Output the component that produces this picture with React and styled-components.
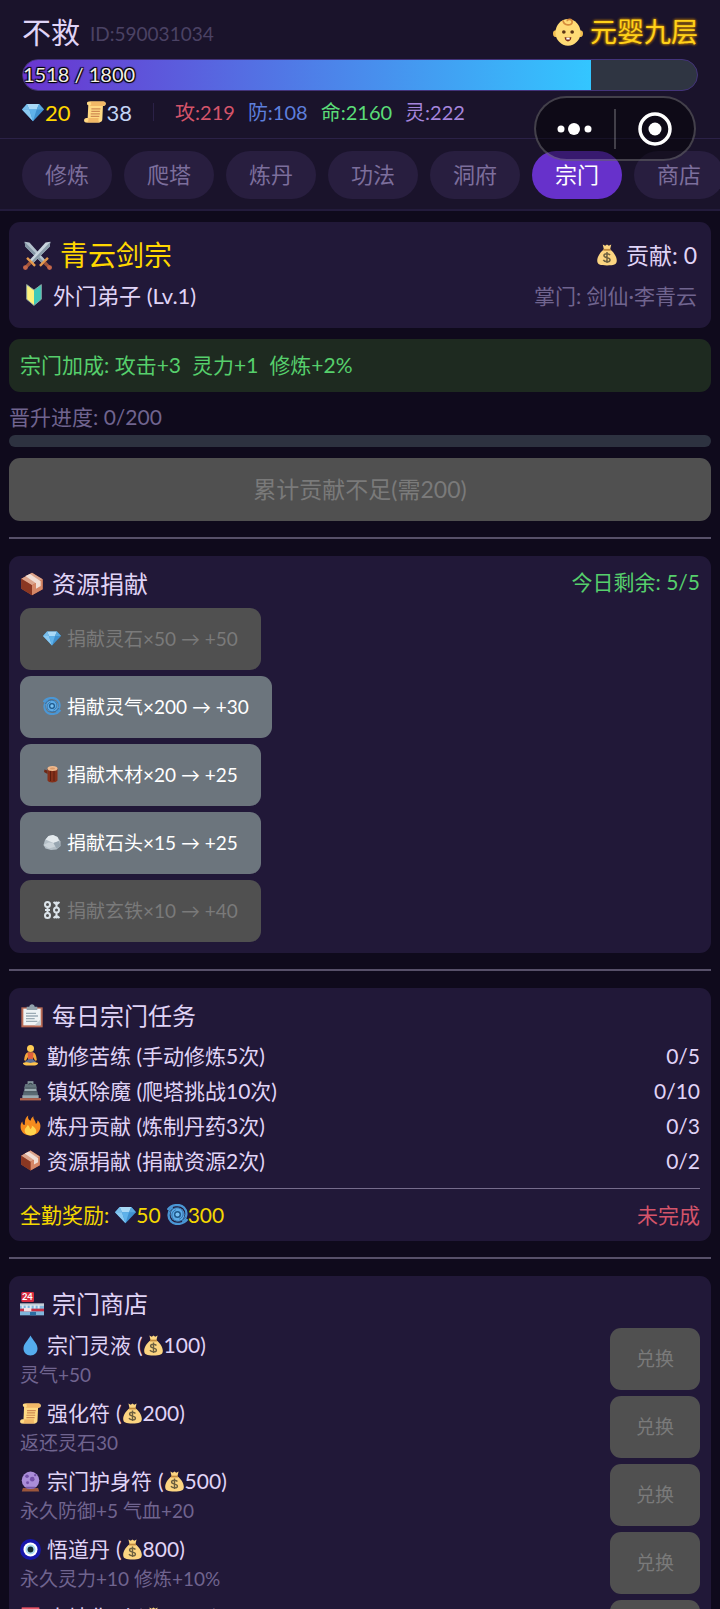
import { useState } from "react";
import styled, { createGlobalStyle } from "styled-components";

const GlobalStyle = createGlobalStyle`
    * {
        box-sizing: border-box;
    }
    body {
        margin: 0;
        background-color: #0f0a1c;
    }
    body, button {
        font-family: Lato, "Noto Sans CJK SC", sans-serif;
    }
`

const Page = styled.div`
    height: 100vh;
    display: flex;
    flex-direction: column;
    overflow: hidden;
    color: #e0d4f7;
    font-size: 21px;
`

/* ---------- header ---------- */

const Header = styled.header`
    position: relative;
    flex-shrink: 0;
    padding: 15px 22px 11px;
    background-color: #1a132b;
    border-bottom: 1px solid #2b2147;
`
const HeaderRow = styled.div`
    display: flex;
    align-items: center;
    justify-content: space-between;
    height: 36px;
`
const Player = styled.div`
    display: flex;
    align-items: center;
    gap: 10px;
`
const PlayerName = styled.span`
    font-size: 29px;
    line-height: 36px;
`
const PlayerId = styled.span`
    font-size: 19px;
    color: #4b4264;
`
const Realm = styled.div`
    display: flex;
    align-items: center;
    gap: 7px;
    font-size: 27px;
    line-height: 34px;
    padding-bottom: 2px;
    color: #ffd21a;
    text-shadow: 0 0 3px #c98500, 0 0 3px #c98500;
`
const ExpBar = styled.div`
    display: grid;
    align-items: center;
    height: 32px;
    margin: 8px 0 6px;
    border: 1px solid #43337a;
    border-radius: 16px;
    background-color: #2f3542;
    overflow: hidden;
`
const ExpFill = styled.div`
    grid-area: 1 / 1;
    height: 100%;
    background: linear-gradient(90deg, #6a35d0, #33c6ff);
`
const ExpText = styled.span`
    grid-area: 1 / 1;
    font-size: 20px;
    line-height: 28px;
    padding-bottom: 2px;
    color: #f4efe4;
    text-shadow: 1px 1px 1px #000, -1px -1px 1px #000, 1px -1px 1px #000, -1px 1px 1px #000;
`
const Stats = styled.div`
    display: flex;
    align-items: center;
    gap: 13px;
    height: 30px;
`
const Currency = styled.span`
    display: flex;
    align-items: center;
    gap: 1px;
    font-size: 22px;
    color: ${props => props.color};
`
const StatDivider = styled.span`
    width: 1px;
    height: 18px;
    margin: 0 8px;
    background-color: #2b2147;
`
const Stat = styled.span`
    font-size: 20px;
    line-height: 30px;
    color: ${props => props.color};
`
const Capsule = styled.div`
    position: absolute;
    top: 96px;
    right: 24px;
    z-index: 2;
    display: flex;
    align-items: center;
    width: 162px;
    height: 65px;
    border: 2px solid rgba(255, 255, 255, 0.22);
    border-radius: 33px;
    background-color: rgba(0, 0, 0, 0.45);
`
const CapsuleButton = styled.button`
    flex: 1;
    display: flex;
    justify-content: center;
    padding: 0;
    border: 0;
    background: none;
    cursor: pointer;
    & + & {
        border-left: 2px solid rgba(255, 255, 255, 0.22);
    }
`

/* ---------- tabs ---------- */

const Tabs = styled.nav`
    flex-shrink: 0;
    display: flex;
    gap: 12px;
    padding: 12px 22px 10px;
    background-color: #1a132b;
    border-bottom: 2px solid #231b3c;
    overflow: hidden;
`
const Tab = styled.button`
    flex-shrink: 0;
    height: 48px;
    padding: 0 23px;
    border: 0;
    border-radius: 24px;
    font-size: 22px;
    line-height: 48px;
    color: ${props => props.$active ? "#ffffff" : "#7c6e9c"};
    background-color: ${props => props.$active ? "#6731cb" : "#281e3f"};
    cursor: pointer;
`

/* ---------- content ---------- */

const Main = styled.main`
    flex: 1;
    min-height: 0;
    padding: 11px 9px;
    overflow-y: auto;
    scrollbar-width: none;
`
const Card = styled.section`
    padding: 11px;
    border-radius: 11px;
    background-color: #211838;
`
const SectCard = styled(Card)`
    padding: 13px 14px;
`
const Line = styled.div`
    display: flex;
    align-items: center;
    justify-content: space-between;
    height: ${props => props.$tall ? "40px" : "31px"};
    line-height: 31px;
`
const Label = styled.span`
    display: flex;
    align-items: center;
    gap: ${props => props.$gap || 6}px;
    font-size: ${props => props.$size || 21}px;
    color: ${props => props.color};
`
const Bonus = styled.div`
    display: flex;
    align-items: center;
    gap: 11px;
    height: 53px;
    margin-top: 11px;
    padding: 0 11px 3px;
    border-radius: 11px;
    color: #56cf6c;
    background-color: #1e2a20;
`
const ProgressLabel = styled.div`
    margin: 10px 0 3px;
    line-height: 30px;
    color: #70648f;
`
const ProgressTrack = styled.div`
    height: 12px;
    border-radius: 6px;
    background-color: #2d3240;
`
const Button = styled.button`
    height: 62px;
    padding: 0 23px 3px;
    border: 0;
    border-radius: 11px;
    font-size: 19px;
    color: #ffffff;
    background-color: #6c757d;
    cursor: pointer;
    &:disabled {
        color: #7a7a7a;
        background-color: #505050;
        cursor: default;
    }
`
const PromoteButton = styled(Button)`
    display: block;
    width: 100%;
    height: 63px;
    margin-top: 11px;
    font-size: 23px;
`
const DonateButton = styled(Button)`
    display: flex;
    align-items: center;
    gap: 6px;
`
const BuyButton = styled(Button)`
    width: 90px;
`
const Divider = styled.hr`
    height: 2px;
    margin: 16px 0 17px;
    border: 0;
    background-color: #575069;
`
const InnerDivider = styled(Divider)`
    height: 1px;
    margin: 12px 0 10px;
    background-color: #766c8c;
`
const CardHead = styled.div`
    display: flex;
    align-items: center;
    justify-content: space-between;
    margin-bottom: 7px;
    line-height: 34px;
`
const CardTitle = styled.h2`
    display: flex;
    align-items: center;
    gap: 8px;
    margin: 0;
    font-size: 24px;
    font-weight: 400;
`
const Remaining = styled.span`
    line-height: 30px;
    padding-bottom: 4px;
    color: #56cf6c;
`
const Stack = styled.div`
    display: flex;
    flex-direction: column;
    align-items: ${props => props.$start ? "flex-start" : "stretch"};
    gap: ${props => props.$gap}px;
`
const Goods = styled.div`
    display: flex;
    align-items: center;
    justify-content: space-between;
    height: 62px;
`
const GoodsName = styled.div`
    display: flex;
    align-items: center;
    gap: 6px;
    line-height: 32px;
`
const Price = styled.span`
    display: flex;
    align-items: center;
`
const GoodsDesc = styled.div`
    font-size: 19px;
    line-height: 28px;
    color: #70648f;
`
const Svg = styled.svg`
    display: block;
    flex-shrink: 0;
`

/* ---------- icons ---------- */

const shapes = {
    gem: <>
        <path d="M8 5h20l8 9-18 19L0 14z" fill="#3f91d0" />
        <path d="M8 5h20l-4 9H12z" fill="#a9d9f7" />
        <path d="M8 5l4 9H0z" fill="#78bdea" />
        <path d="M28 5l-4 9h12z" fill="#5aa9de" />
        <path d="M0 14h12l6 19z" fill="#8bcaf2" />
        <path d="M12 14h12l-6 19z" fill="#5fb2ea" />
    </>,
    scroll: <>
        <path d="M8 1h24c5 0 5 7 0 7h-1l-1 22c0 3-2 5-5 5H3c-4 0-4-7 1-7h2L7 7C4 6 4 1 8 1z" fill="#ffd983" />
        <path d="M8 1c5 0 5 7 1 7h22c5 0 5-7 1-7zM3 35c4 0 5-3 4-7h17c-1 4 0 7 2 7z" fill="#f2b867" />
        <path d="M12 13h15M12 17h14M11 21h15M11 25h14" stroke="#d08a52" strokeWidth="2" />
    </>,
    baby: <>
        <circle cx="4" cy="20" r="4" fill="#f2be50" />
        <circle cx="32" cy="20" r="4" fill="#f2be50" />
        <ellipse cx="18" cy="18.500" rx="15" ry="16" fill="#ffdb76" />
        <path d="M12 4c1 7 11 7 11 2 0-4-6-4-6-1" fill="none" stroke="#d58b3c" strokeWidth="2" />
        <circle cx="13" cy="18" r="2.200" fill="#5b3416" />
        <circle cx="23" cy="18" r="2.200" fill="#5b3416" />
        <path d="M14 24c3 1 5 1 8 0 0 7-8 7-8 0z" fill="#7a2c1c" />
        <path d="M16 25h4v2h-4z" fill="#fff" />
    </>,
    swords: <>
        <path d="M2 1l6 1 20 22-4 4L3 7z" fill="#b4c2cd" />
        <path d="M2 1l24 25-2 2L3 7z" fill="#8496a5" />
        <path d="M34 1l-6 1L8 24l4 4L33 7z" fill="#c9d5de" />
        <path d="M34 1L10 26l2 2L33 7z" fill="#8b9daa" />
        <path d="M5 21l10 10M31 21L21 31" stroke="#e59a4e" strokeWidth="3" />
        <path d="M9 27l-6 6M27 27l6 6" stroke="#a1543a" strokeWidth="4" />
        <circle cx="3" cy="33" r="3" fill="#c4664a" />
        <circle cx="33" cy="33" r="3" fill="#c4664a" />
    </>,
    beginner: <>
        <path d="M6 1l12 9v25L6 25z" fill="#fdf27c" />
        <path d="M30 1l-12 9v25l12-10z" fill="#3fc9b8" />
        <path d="M6 1l12 9L30 1v24L18 35 6 25z" fill="none" stroke="#8fa9a6" strokeWidth="1.500" />
    </>,
    money: <>
        <path d="M11 1l4 2 3-2 3 2 4-2-2 8c6 4 11 12 11 18 0 7-5 8-16 8S2 34 2 27C2 21 7 13 13 9z" fill="#fcd581" />
        <path d="M12 8h12v3H12z" fill="#c08a3e" />
        <path d="M23 18c-2-3-10-3-10 1 0 5 10 2 10 7 0 4-9 4-11 0M18 13v18" fill="none" stroke="#6d6040" strokeWidth="2.400" />
    </>,
    box: <>
        <path d="M18 1l16 10v15L18 35 2 25V10z" fill="#b3593b" />
        <path d="M18 1l16 10-16 9L2 10z" fill="#dba48c" />
        <path d="M18 20l16-9v15l-16 9z" fill="#d58767" />
        <path d="M8 6l16 11v8l7-4v-7L15 3z" fill="#f1ded5" />
        <path d="M2 10l16 10v15L2 25z" fill="#8a3722" />
    </>,
    cyclone: <>
        <circle cx="18" cy="18" r="12" fill="#5caae6" />
        <path d="M1 10C7 1 22-1 29 6c7 7 5 19-3 24" fill="none" stroke="#4a97d6" strokeWidth="4" />
        <path d="M35 26c-6 9-21 11-28 4-7-7-5-19 3-24" fill="none" stroke="#4a97d6" strokeWidth="4" />
        <path d="M4 14C9 4 24 4 27 13c2 6-1 11-6 13M32 22c-5 10-20 10-23 1-2-6 1-11 6-13" fill="none" stroke="#2a6398" strokeWidth="1.500" />
        <circle cx="18" cy="18" r="6" fill="#1f5788" />
        <circle cx="18" cy="18" r="3.500" fill="#79c1f4" />
    </>,
    wood: <>
        <path d="M9 7v24c2 5 17 5 20 0V7z" fill="#84301a" />
        <path d="M9 18l-7-4 1-5 6 2z" fill="#6e2815" />
        <path d="M15 12v20M22 12v20" stroke="#5b1d0e" strokeWidth="2" />
        <ellipse cx="19" cy="7" rx="10" ry="5" fill="#efb98d" />
        <ellipse cx="19" cy="7" rx="5" ry="2" fill="#d99a6b" />
    </>,
    rock: <>
        <path d="M1 24l3-10 7-8 9-2 9 4 6 9v9l-8 7-11 1-11-3z" fill="#b5c0c8" />
        <path d="M5 13l6-7 9-2 9 4 3 8-11 4z" fill="#e3e9ed" />
        <path d="M1 24l10-5 10 1 4 7-13 4z" fill="#cbd4da" />
        <path d="M21 20l11-4 3 10-8 5z" fill="#98a6b1" />
    </>,
    chains: <g fill="none" stroke="#dbe3e9" strokeWidth="4">
        <ellipse cx="9" cy="7" rx="5" ry="5" />
        <ellipse cx="9" cy="29" rx="5" ry="5" />
        <ellipse cx="27" cy="18" rx="5" ry="5" />
        <path d="M9 10v16M27 1v13M27 22v13M21 2l6 5 6-5M21 34l6-5 6 5M4 18h10" />
    </g>,
    clipboard: <>
        <path d="M2 5h32v30H2z" fill="#b96a54" />
        <path d="M5 7h26v25H5z" fill="#eef3f5" />
        <path d="M10 4h4c0-5 8-5 8 0h4v5H10z" fill="#93a3ad" />
        <path d="M9 14h15M9 18h18M9 22h13M9 26h17" stroke="#9babb5" strokeWidth="2" />
        <path d="M31 32v-9l-9 9z" fill="#c5d0d6" />
    </>,
    lotus: <>
        <circle cx="18" cy="6" r="6" fill="#ffcd55" />
        <path d="M13 13h10c5 2 5 8 6 13l-3 1-4-7v6h-8v-6l-4 7-3-1c1-5 1-11 6-13z" fill="#f4a83a" />
        <path d="M13 13h10l-1 13h-8z" fill="#e0603f" />
        <path d="M8 29l7-5h6l7 5-4 4H12z" fill="#5c6f93" />
        <path d="M5 31c3-2 8-2 13 0 5-2 10-2 13 0 0 3-3 4-6 4H11c-3 0-6-1-6-4z" fill="#ffc44d" />
    </>,
    tower: <>
        <path d="M13 2h10v6H13z" fill="#87979f" />
        <path d="M9 7h18l2 7H7z" fill="#64747d" />
        <path d="M8 14h20l1 7H7z" fill="#9aabb1" />
        <path d="M6 20h24l1 6H5z" fill="#596a73" />
        <path d="M4 26h28v5H4z" fill="#9aabb1" />
        <path d="M0 31h36v4H0z" fill="#b0654f" />
        <path d="M9 14h18M6 20h24" stroke="#3e4d55" strokeWidth="1.500" />
        <path d="M15 8c0-3 6-3 6 0" fill="none" stroke="#3e4d55" strokeWidth="2" />
    </>,
    fire: <>
        <path d="M18 35C7 35 1 28 1 20c0-4 1-7 3-9 0 4 2 6 4 6 1-3-1-11 6-16-1 5 1 8 4 9 1-3 1-5 5-8-1 5 4 7 4 13 2 0 3-3 3-6 4 3 5 7 5 10 0 9-6 16-17 16z" fill="#f58b1f" />
        <path d="M18 35c-6 0-10-4-10-8 0-5 4-6 5-10 4 2 3 6 5 7 2-1 3-4 2-6 5 3 8 6 8 10 0 4-4 7-10 7z" fill="#ffd44d" />
    </>,
    store: <>
        <path d="M0 18h36v17H0z" fill="#7fb6dc" />
        <path d="M0 17h36v4H0z" fill="#c3cfd8" />
        <path d="M4 20v5M10 20v5M16 20v5M22 20v5M28 20v5" stroke="#d8ebf7" strokeWidth="3" />
        <path d="M0 25h36v4H0z" fill="#c72f43" />
        <path d="M6 24h11v5H6z" fill="#f7dfe2" />
        <path d="M15 30h9v5h-9z" fill="#2a6ea3" />
        <rect x="2" width="19" height="15" rx="2" fill="#d92b40" />
        <text x="11" y="12" textAnchor="middle" fontSize="14" fontWeight="700" fill="#fff">24</text>
    </>,
    drop: <path d="M18 1c4 8 12 14 12 22 0 7-5 12-12 12S6 30 6 23C6 15 14 9 18 1z" fill="#55acee" />,
    orb: <>
        <path d="M5 29h26l2 6H3z" fill="#9c563b" />
        <circle cx="18" cy="16" r="15" fill="#aa8dd8" />
        <path d="M10 27h16v3H10z" fill="#7556a8" />
        <circle cx="21" cy="14" r="4" fill="#7350a8" />
        <circle cx="12" cy="9" r="3" fill="#7350a8" />
        <circle cx="13" cy="20" r="2.500" fill="#7350a8" />
        <circle cx="26" cy="7" r="2" fill="#7350a8" />
    </>,
    nazar: <>
        <circle cx="18" cy="18" r="18" fill="#1717ab" />
        <circle cx="18" cy="18" r="12" fill="#fff" />
        <circle cx="18" cy="18" r="8.500" fill="#a9dcf0" />
        <circle cx="18" cy="18" r="5" fill="#12292e" />
    </>,
    packet: <>
        <path d="M3 1h30v34H3z" fill="#d4304a" />
        <path d="M3 1h30v9c-10 6-20 6-30 0z" fill="#e8596b" />
        <circle cx="18" cy="14" r="5" fill="#ffd983" />
    </>,
};

const Icon = ({ name, size = 21 }) => (
    <Svg viewBox="0 0 36 36" width={size} height={size} aria-hidden="true">{shapes[name]}</Svg>
)

/* ---------- data ---------- */

const tabs = ["修炼", "爬塔", "炼丹", "功法", "洞府", "宗门", "商店"];

const stats = [
    { text: "攻:219", color: "#d4546a" },
    { text: "防:108", color: "#5d7fdc" },
    { text: "命:2160", color: "#5bdc78" },
    { text: "灵:222", color: "#a585dc" },
];

const exp = { now: 1518, max: 1800 };

const donations = [
    { icon: "gem", text: "捐献灵石×50 → +50", disabled: true },
    { icon: "cyclone", text: "捐献灵气×200 → +30" },
    { icon: "wood", text: "捐献木材×20 → +25" },
    { icon: "rock", text: "捐献石头×15 → +25" },
    { icon: "chains", text: "捐献玄铁×10 → +40", disabled: true },
];

const tasks = [
    { icon: "lotus", text: "勤修苦练 (手动修炼5次)", progress: "0/5" },
    { icon: "tower", text: "镇妖除魔 (爬塔挑战10次)", progress: "0/10" },
    { icon: "fire", text: "炼丹贡献 (炼制丹药3次)", progress: "0/3" },
    { icon: "box", text: "资源捐献 (捐献资源2次)", progress: "0/2" },
];

const goods = [
    { icon: "drop", name: "宗门灵液", price: 100, desc: "灵气+50" },
    { icon: "scroll", name: "强化符", price: 200, desc: "返还灵石30" },
    { icon: "orb", name: "宗门护身符", price: 500, desc: "永久防御+5 气血+20" },
    { icon: "nazar", name: "悟道丹", price: 800, desc: "永久灵力+10 修炼+10%" },
    { icon: "packet", name: "大地化形", price: 1000, desc: "永久攻击+10" },
];

const App = () => {
    const [active, setActive] = useState("宗门");

    return (
        <Page>
            <GlobalStyle />
            <Header>
                <HeaderRow>
                    <Player>
                        <PlayerName>不救</PlayerName>
                        <PlayerId>ID:590031034</PlayerId>
                    </Player>
                    <Realm><Icon name="baby" size={30} />元婴九层</Realm>
                </HeaderRow>
                <ExpBar>
                    <ExpFill style={{ width: `${exp.now / exp.max * 100}%` }} />
                    <ExpText>{exp.now} / {exp.max}</ExpText>
                </ExpBar>
                <Stats>
                    <Currency color="#ffd700"><Icon name="gem" size={22} />20</Currency>
                    <Currency color="#c3d4f5"><Icon name="scroll" size={22} />38</Currency>
                    <StatDivider />
                    {stats.map((s) => <Stat key={s.text} color={s.color}>{s.text}</Stat>)}
                </Stats>
                <Capsule>
                    <CapsuleButton aria-label="更多">
                        <Svg viewBox="0 0 36 40" width="36" height="40" fill="#fff">
                            <circle cx="4" cy="20" r="3.500" />
                            <circle cx="17" cy="20" r="6" />
                            <circle cx="31" cy="20" r="3.500" />
                        </Svg>
                    </CapsuleButton>
                    <CapsuleButton aria-label="关闭">
                        <Svg viewBox="0 0 36 40" width="36" height="40">
                            <circle cx="18" cy="20" r="15" fill="none" stroke="#fff" strokeWidth="3.500" />
                            <circle cx="18" cy="20" r="6.500" fill="#fff" />
                        </Svg>
                    </CapsuleButton>
                </Capsule>
            </Header>

            <Tabs>
                {tabs.map((t) => (
                    <Tab key={t} $active={t === active} onClick={() => setActive(t)}>{t}</Tab>
                ))}
            </Tabs>

            <Main>
                <SectCard>
                    <Line $tall>
                        <Label $size={28} $gap={8} color="#ffd700"><Icon name="swords" size={29} />青云剑宗</Label>
                        <Label $size={23} $gap={8}><Icon name="money" size={22} />贡献: 0</Label>
                    </Line>
                    <Line $tall>
                        <Label $size={22} $gap={8}><Icon name="beginner" size={22} />外门弟子 (Lv.1)</Label>
                        <Label color="#70648f">掌门: 剑仙·李青云</Label>
                    </Line>
                </SectCard>

                <Bonus>
                    <span>宗门加成: 攻击+3</span>
                    <span>灵力+1</span>
                    <span>修炼+2%</span>
                </Bonus>

                <ProgressLabel>晋升进度: 0/200</ProgressLabel>
                <ProgressTrack />
                <PromoteButton disabled>累计贡献不足(需200)</PromoteButton>

                <Divider />

                <Card>
                    <CardHead>
                        <CardTitle><Icon name="box" size={24} />资源捐献</CardTitle>
                        <Remaining>今日剩余: 5/5</Remaining>
                    </CardHead>
                    <Stack $start $gap={6}>
                        {donations.map((d) => (
                            <DonateButton key={d.text} disabled={d.disabled}>
                                <Icon name={d.icon} size={18} />{d.text}
                            </DonateButton>
                        ))}
                    </Stack>
                </Card>

                <Divider />

                <Card>
                    <CardHead>
                        <CardTitle><Icon name="clipboard" size={24} />每日宗门任务</CardTitle>
                    </CardHead>
                    <Stack $gap={4}>
                        {tasks.map((t) => (
                            <Line key={t.text}>
                                <Label><Icon name={t.icon} />{t.text}</Label>
                                <span>{t.progress}</span>
                            </Line>
                        ))}
                    </Stack>
                    <InnerDivider />
                    <Line>
                        <Label color="#f5d800">
                            全勤奖励:
                            <Price><Icon name="gem" />50</Price>
                            <Price><Icon name="cyclone" />300</Price>
                        </Label>
                        <Label color="#d4546a">未完成</Label>
                    </Line>
                </Card>

                <Divider />

                <Card>
                    <CardHead>
                        <CardTitle><Icon name="store" size={24} />宗门商店</CardTitle>
                    </CardHead>
                    <Stack $gap={6}>
                        {goods.map((g) => (
                            <Goods key={g.name}>
                                <div>
                                    <GoodsName>
                                        <Icon name={g.icon} />
                                        {g.name}
                                        <Price>(<Icon name="money" />{g.price})</Price>
                                    </GoodsName>
                                    <GoodsDesc>{g.desc}</GoodsDesc>
                                </div>
                                <BuyButton disabled>兑换</BuyButton>
                            </Goods>
                        ))}
                    </Stack>
                </Card>
            </Main>
        </Page>
    )
}

export default App
